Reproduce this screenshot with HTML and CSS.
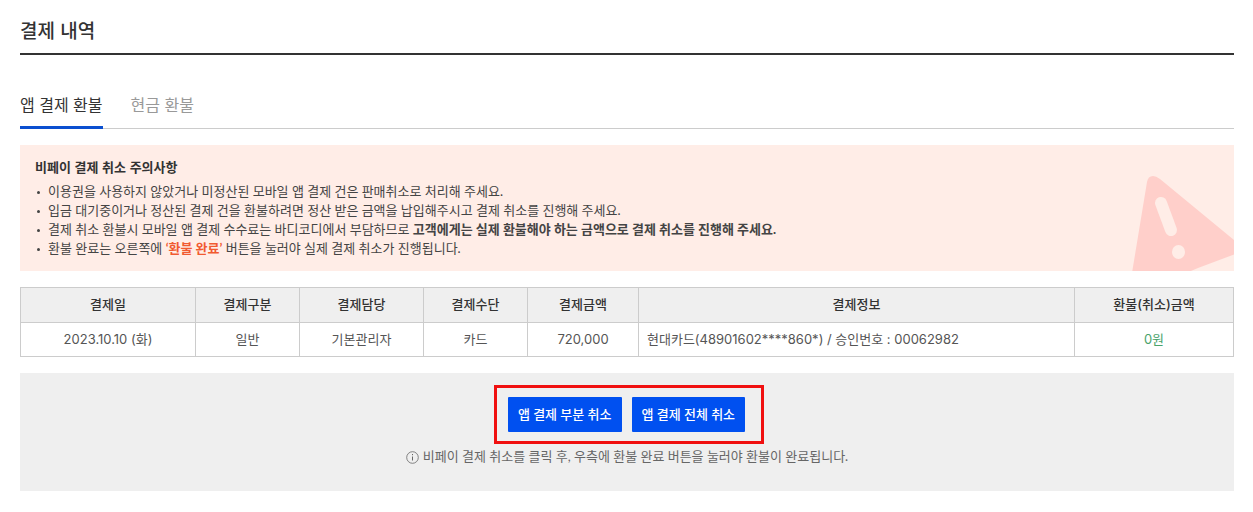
FILE: index.html
```html
<!DOCTYPE html>
<html lang="ko">

<head>
    <meta charset="UTF-8">
    <meta name="viewport" content="width=device-width, initial-scale=1.0">
    <title>결제 내역</title>
    <link rel="stylesheet" href="styles.css">
</head>

<body>
    <h1>결제 내역</h1>

    <nav class="tabs">
        <a href="#app" class="tab active">앱 결제 환불</a>
        <a href="#cash" class="tab">현금 환불</a>
    </nav>

    <section class="notice">
        <h2>비페이 결제 취소 주의사항</h2>
        <ul>
            <li>이용권을 사용하지 않았거나 미정산된 모바일 앱 결제 건은 판매취소로 처리해 주세요.</li>
            <li>입금 대기중이거나 정산된 결제 건을 환불하려면 정산 받은 금액을 납입해주시고 결제 취소를 진행해 주세요.</li>
            <li>결제 취소 환불시 모바일 앱 결제 수수료는 바디코디에서 부담하므로 <strong>고객에게는 실제 환불해야 하는 금액으로 결제 취소를 진행해 주세요.</strong></li>
            <li>환불 완료는 오른쪽에 <strong class="point">‘환불 완료’</strong> 버튼을 눌러야 실제 결제 취소가 진행됩니다.</li>
        </ul>
        <svg class="notice-icon" width="102" height="96" viewBox="0 0 102 96" aria-hidden="true">
            <path d="M15 7 Q16 1 21 1 Q24 1 28 4 L107 69 Q112 76 103 79 L66 93 L40 104 L-1 104 Z" fill="#ffcfca"/>
            <path d="M29 28 L39 55" stroke="#ffede7" stroke-width="12" stroke-linecap="round"/>
            <ellipse cx="46.500" cy="77" rx="6.500" ry="7" fill="#ffede7"/>
        </svg>
    </section>

    <table>
        <colgroup>
            <col class="col-date">
            <col class="col-type">
            <col class="col-manager">
            <col class="col-method">
            <col class="col-price">
            <col class="col-info">
            <col class="col-refund">
        </colgroup>
        <thead>
            <tr>
                <th>결제일</th>
                <th>결제구분</th>
                <th>결제담당</th>
                <th>결제수단</th>
                <th>결제금액</th>
                <th>결제정보</th>
                <th>환불(취소)금액</th>
            </tr>
        </thead>
        <tbody>
            <tr>
                <td>2023.10.10 (화)</td>
                <td>일반</td>
                <td>기본관리자</td>
                <td>카드</td>
                <td>720,000</td>
                <td class="info">현대카드(48901602****860*) / 승인번호 : 00062982</td>
                <td class="refund">0원</td>
            </tr>
        </tbody>
    </table>

    <section class="actions">
        <div class="button-group">
            <button type="button">앱 결제 부분 취소</button>
            <button type="button">앱 결제 전체 취소</button>
        </div>
        <p class="guide">
            <svg width="13" height="15" viewBox="0 0 13 15" aria-hidden="true">
                <circle cx="6.500" cy="8.500" r="5.800" fill="none" stroke="#666" stroke-width="0.800"/>
                <path d="M6.500 7.500V11.500M6.500 5V6.200" stroke="#666" stroke-width="1"/>
            </svg>
            비페이 결제 취소를 클릭 후, 우측에 환불 완료 버튼을 눌러야 환불이 완료됩니다.
        </p>
    </section>
</body>

</html>
```
FILE: styles.css
```css
/* General Styles */
* {
    box-sizing: border-box;
}

body {
    margin: 0;
    padding: 0 19px 20px 20px;
    background-color: #fff;
    color: #333;
    font-family: Lato, "Noto Sans CJK KR", sans-serif;
    font-size: 13px;
    line-height: 19px;
}

h1,
h2,
.tabs {
    font-family: "Noto Sans CJK KR", sans-serif;
}

h1 {
    margin: 0;
    padding: 17px 0 10px;
    border-bottom: 2px solid #333;
    font-size: 19px;
    font-weight: 500;
    line-height: 26px;
}

/* Tabs */
.tabs {
    display: flex;
    gap: 28px;
    margin-top: 37px;
    border-bottom: 1px solid #ccc;
    font-size: 16px;
    line-height: 24px;
}

.tab {
    margin-bottom: -1px;
    padding-bottom: 10px;
    border-bottom: 3px solid transparent;
    color: #999;
    text-decoration: none;
}

.tab.active {
    border-bottom-color: #0a4fd0;
    color: #333;
}

/* Notice */
.notice {
    position: relative;
    margin-top: 16px;
    padding: 12px 15px 13px;
    overflow: hidden;
    background-color: #ffede7;
}

.notice h2 {
    margin: 0 0 5px;
    font-size: 13px;
    font-weight: 700;
    line-height: 20px;
}

.notice ul {
    margin: 0;
    padding: 0;
    list-style: none;
    color: #444;
}

.notice li {
    position: relative;
    padding-left: 13px;
}

.notice li::before {
    content: "";
    position: absolute;
    top: 9px;
    left: 2px;
    width: 3px;
    height: 3px;
    border-radius: 50%;
    background-color: #444;
}

.notice .point {
    color: #f15a31;
}

.notice-icon {
    position: absolute;
    right: 0;
    bottom: 0;
}

/* Table */
table {
    width: 100%;
    margin-top: 16px;
    border-collapse: collapse;
    table-layout: fixed;
    font-family: Inter, "Noto Sans CJK KR", sans-serif;
}

th,
td {
    padding: 7px 8px;
    border: 1px solid #ccc;
    text-align: center;
    line-height: 19px;
}

th {
    padding-bottom: 8px;
    background-color: #efefef;
    font-weight: 500;
}

td {
    color: #555;
}

td.info {
    text-align: left;
}

td.refund {
    color: #4aa36c;
}

.col-date {
    width: 175px;
}

.col-type,
.col-method {
    width: 104px;
}

.col-manager {
    width: 124px;
}

.col-price {
    width: 111px;
}

.col-refund {
    width: 159px;
}

/* Buttons */
.actions {
    display: flex;
    flex-direction: column;
    align-items: center;
    margin-top: 16px;
    padding: 12px 0 25px;
    background-color: #efefef;
}

.button-group {
    display: flex;
    gap: 10px;
    margin-left: 4px;
    padding: 9px 16px 9px 11px;
    border: 3px solid #f01010;
}

button {
    height: 35px;
    padding: 0 10px 2px;
    border: none;
    border-radius: 1px;
    background-color: #0050f0;
    color: #fff;
    font-family: inherit;
    font-size: 13px;
    font-weight: 500;
    cursor: pointer;
}

.guide {
    display: flex;
    align-items: center;
    gap: 4px;
    margin: 3px 0 0;
    color: #666;
}
```
